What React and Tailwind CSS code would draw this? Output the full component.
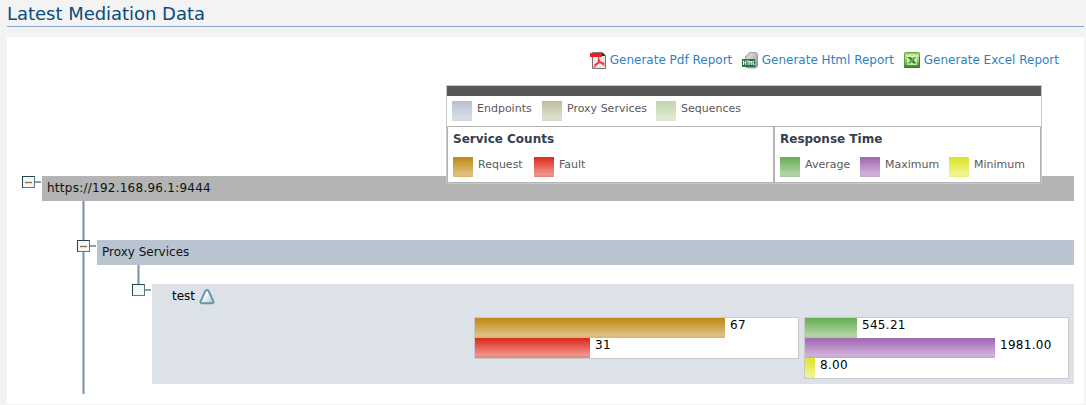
import React from 'react';

const fills = {
  endpoint: 'bg-[linear-gradient(#b9c3d0,#b9c3d0_8%,#d9dee6_85%,#d2d8e2)]',
  proxy: 'bg-[linear-gradient(#bfc0a0,#bfc0a0_8%,#dedfd0_85%,#d6d7c2)]',
  sequence: 'bg-[linear-gradient(#c2d6ad,#c2d6ad_8%,#deead4_85%,#d8e6cc)]',
  request: 'bg-[linear-gradient(#c28c1b,#c28c1b_8%,#dfc080_85%,#dbb66a)]',
  fault: 'bg-[linear-gradient(#dd3125,#dd3125_8%,#f0938c_85%,#ec837b)]',
  average: 'bg-[linear-gradient(#6cb05a,#6cb05a_8%,#b0d6a5_85%,#a2cd97)]',
  maximum: 'bg-[linear-gradient(#a36cb4,#a36cb4_8%,#d0b2da_85%,#c7a3d2)]',
  minimum: 'bg-[linear-gradient(#dde52c,#dde52c_8%,#f0f490_85%,#ebef7c)]',
};

function PdfIcon() {
  return (
    <svg width="16" height="17" viewBox="0 0 16 17">
      <path d="M2.500 .5h10l3 3v13h-13z" fill="#e9e9e9" stroke="#77736f" />
      <path d="M12 .5v3.500h3.500z" fill="#4a1c1c" />
      <path d="M0 1h12v4H0z" fill="#f01c24" />
      <path d="M8.500 5c0 3 1.500 6 6 8.500M8.800 7c-.3 3.500-1.800 6.500-5.300 8.500M4.500 13c2-1.800 6-2.800 10-1.800" fill="none" stroke="#ea3138" strokeWidth="1.200" />
    </svg>
  );
}

function HtmlIcon() {
  return (
    <svg width="16" height="17" viewBox="0 0 16 17">
      <defs>
        <linearGradient id="page" x1="0" y1="0" x2="1" y2="1">
          <stop offset="0" stopColor="#f4f4f4" />
          <stop offset="1" stopColor="#8d8d8d" />
        </linearGradient>
      </defs>
      <path d="M7.500 .6h5.500q2.500 0 2.500 2.500v10.500q0 2.300-2.500 2.300H6q-2.500 0-2.500-2.300V4.600z" fill="url(#page)" stroke="#989898" />
      <path d="M3.500 5q4 .3 4-4.400z" fill="#dadada" stroke="#a5a5a5" strokeWidth=".6" />
      <path d="M0 7h13v8H0z" fill="#2a7044" />
      <path d="M1.500 8.500v4.500M3.700 8.500v4.500M1.500 10.800h2M4.700 9h2.500M6 9v4M7.800 13V9l1 1.800 1-1.800v4M11.300 8.500V12.600H12.600" fill="none" stroke="#e5f3e8" strokeWidth="1" />
    </svg>
  );
}

function ExcelIcon() {
  return (
    <svg width="16" height="16" viewBox="0 0 16 16">
      <defs>
        <linearGradient id="xls" x1="0" y1="0" x2="0" y2="1">
          <stop offset="0" stopColor="#8ccb4c" />
          <stop offset=".2" stopColor="#c4e8a0" />
          <stop offset=".55" stopColor="#8aca58" />
          <stop offset="1" stopColor="#2f8a1e" />
        </linearGradient>
      </defs>
      <rect x=".5" y=".5" width="15" height="15" rx="1" fill="url(#xls)" stroke="#5fa93c" />
      <path d="M.5 13.500v2h15V5" fill="none" stroke="#338222" />
      <path d="M3 3.500h10v9.500H3z" fill="#e9f4df" opacity=".75" />
      <path d="M3.500 5h3.300l5.700 6.500H9.200z" fill="#35832b" />
      <path d="M12.500 5H9.800L3.500 11.500h3z" fill="#5fa44b" />
    </svg>
  );
}

function TriangleIcon() {
  return (
    <svg width="16" height="16" viewBox="0 0 16 16">
      <defs>
        <linearGradient id="tri" x1="0" y1="0" x2="1" y2="1">
          <stop offset=".3" stopColor="#fff" />
          <stop offset="1" stopColor="#b5c3cc" />
        </linearGradient>
      </defs>
      <path d="M6.500 1.900q1.500-1.600 3 0l5 10.600q.2 1.500-1.200 1.700H2.700q-1.400-.2-1.200-1.700z" fill="url(#tri)" stroke="#6299b1" strokeWidth="2" />
    </svg>
  );
}

function Toggle({ open }) {
  return (
    <div className="flex h-3 w-[19px] shrink-0 items-center">
      <div className="flex h-3 w-[13px] items-center justify-center border border-t-[#244450] border-r-[#5c7880] border-b-[#5c7880] border-l-[#244450] bg-[#f2f8f6]">
        {open && <div className="h-[3px] w-[7px] border-y border-[#f3ddd0] bg-[#a5654e]" />}
      </div>
      <div className="h-0.5 w-1.5 bg-[#8c9ea8]" />
    </div>
  );
}

function Line({ className }) {
  return <div className={`ml-[5px] w-[3px] shrink-0 border-x border-[#b6c3cf] bg-[#8296aa] ${className}`} />;
}

function Key({ fill, label }) {
  return (
    <div className="flex">
      <div className={`size-5 ${fill}`} />
      <div className="pt-px pl-[5px] text-[11px] leading-[14px] text-[#595959]">{label}</div>
    </div>
  );
}

function Bar({ fill, width, value }) {
  return (
    <div className="flex h-5">
      <div className={fill} style={{ width }} />
      <div className="pl-[5px] text-[12px] leading-[14px] tracking-[0.3px] text-black">{value}</div>
    </div>
  );
}

function Legend() {
  return (
    <div className="absolute top-[85px] left-[446px] h-[99px] w-[596px] border border-[#c8c8c8] bg-white">
      <div className="h-2.5 bg-[#575757]" />
      <div className="flex h-[30px] pt-[5px] pl-[5px]">
        <div className="w-[90px]"><Key fill={fills.endpoint} label="Endpoints" /></div>
        <div className="w-[114px]"><Key fill={fills.proxy} label="Proxy Services" /></div>
        <Key fill={fills.sequence} label="Sequences" />
      </div>
      <div className="flex h-[57px]">
        <div className="w-[327px] border border-[#b4b4b4] pl-[5px]">
          <div className="pt-[5px] text-[12px] leading-[14px] font-bold text-[#35404f]">Service Counts</div>
          <div className="flex pt-[11px]">
            <div className="w-[81px]"><Key fill={fills.request} label="Request" /></div>
            <Key fill={fills.fault} label="Fault" />
          </div>
        </div>
        <div className="w-[267px] border border-[#b4b4b4] pl-[5px]">
          <div className="pt-[5px] text-[12px] leading-[14px] font-bold text-[#35404f]">Response Time</div>
          <div className="flex pt-[11px]">
            <div className="w-[80px]"><Key fill={fills.average} label="Average" /></div>
            <div className="w-[89px]"><Key fill={fills.maximum} label="Maximum" /></div>
            <Key fill={fills.minimum} label="Minimum" />
          </div>
        </div>
      </div>
    </div>
  );
}

export default function App() {
  return (
    <div className="h-[405px] w-[1086px] overflow-hidden bg-[#f3f3f3] pr-0.5 pl-[7px] font-['DejaVu_Sans',sans-serif] text-[12px] text-[#111]">
      <h1 className="h-[27px] border-b border-[#8ba5cc] pt-[3px] text-[18px] leading-[21px] tracking-[-0.03px] text-[#0b4a7c]">Latest Mediation Data</h1>
      <main className="mt-2.5 h-[367px] bg-white pr-2.5">
        <nav className="flex h-[139px] justify-end pt-[15px] pr-[15px] leading-[17px] text-[#2f7fc5]">
          <a className="flex h-[17px] w-[152px] gap-1"><PdfIcon />Generate Pdf Report</a>
          <a className="flex h-[17px] w-[162px] gap-1"><HtmlIcon />Generate Html Report</a>
          <a className="flex h-[17px] gap-1"><ExcelIcon />Generate Excel Report</a>
        </nav>
        <div className="flex pl-[15px]">
          <Toggle open />
          <div className="ml-px h-[25px] flex-1 bg-[#b4b4b4] pt-[5px] pl-[5px] leading-[14px] tracking-[0.25px]">https://192.168.96.1:9444</div>
        </div>
        <div className="flex pl-[70px]">
          <div className="flex w-5 flex-col">
            <Line className="h-[39px]" />
            <Toggle open />
            <Line className="h-[142px]" />
          </div>
          <div className="flex-1 pt-[39px]">
            <div className="h-[25px] bg-[#bac4d1] pt-[5px] pl-[5px] leading-[14px]">Proxy Services</div>
            <div className="flex pl-[35px]">
              <div className="flex w-5 flex-col">
                <Line className="h-[19px]" />
                <Toggle />
              </div>
              <div className="mt-[19px] h-[100px] flex-1 bg-[#dde1e8]">
                <div className="flex h-[33px] gap-1 pt-[5px] pl-5 leading-[14px] text-black">
                  test
                  <TriangleIcon />
                </div>
                <div className="flex items-start gap-[5px] pl-[322px]">
                  <div className="w-[325px] border border-[#c8c8c8] bg-white">
                    <Bar fill={fills.request} width={250} value="67" />
                    <Bar fill={fills.fault} width={115} value="31" />
                  </div>
                  <div className="w-[265px] border border-[#c8c8c8] bg-white">
                    <Bar fill={fills.average} width={52} value="545.21" />
                    <Bar fill={fills.maximum} width={190} value="1981.00" />
                    <Bar fill={fills.minimum} width={10} value="8.00" />
                  </div>
                </div>
              </div>
            </div>
          </div>
        </div>
      </main>
      <Legend />
    </div>
  );
}
